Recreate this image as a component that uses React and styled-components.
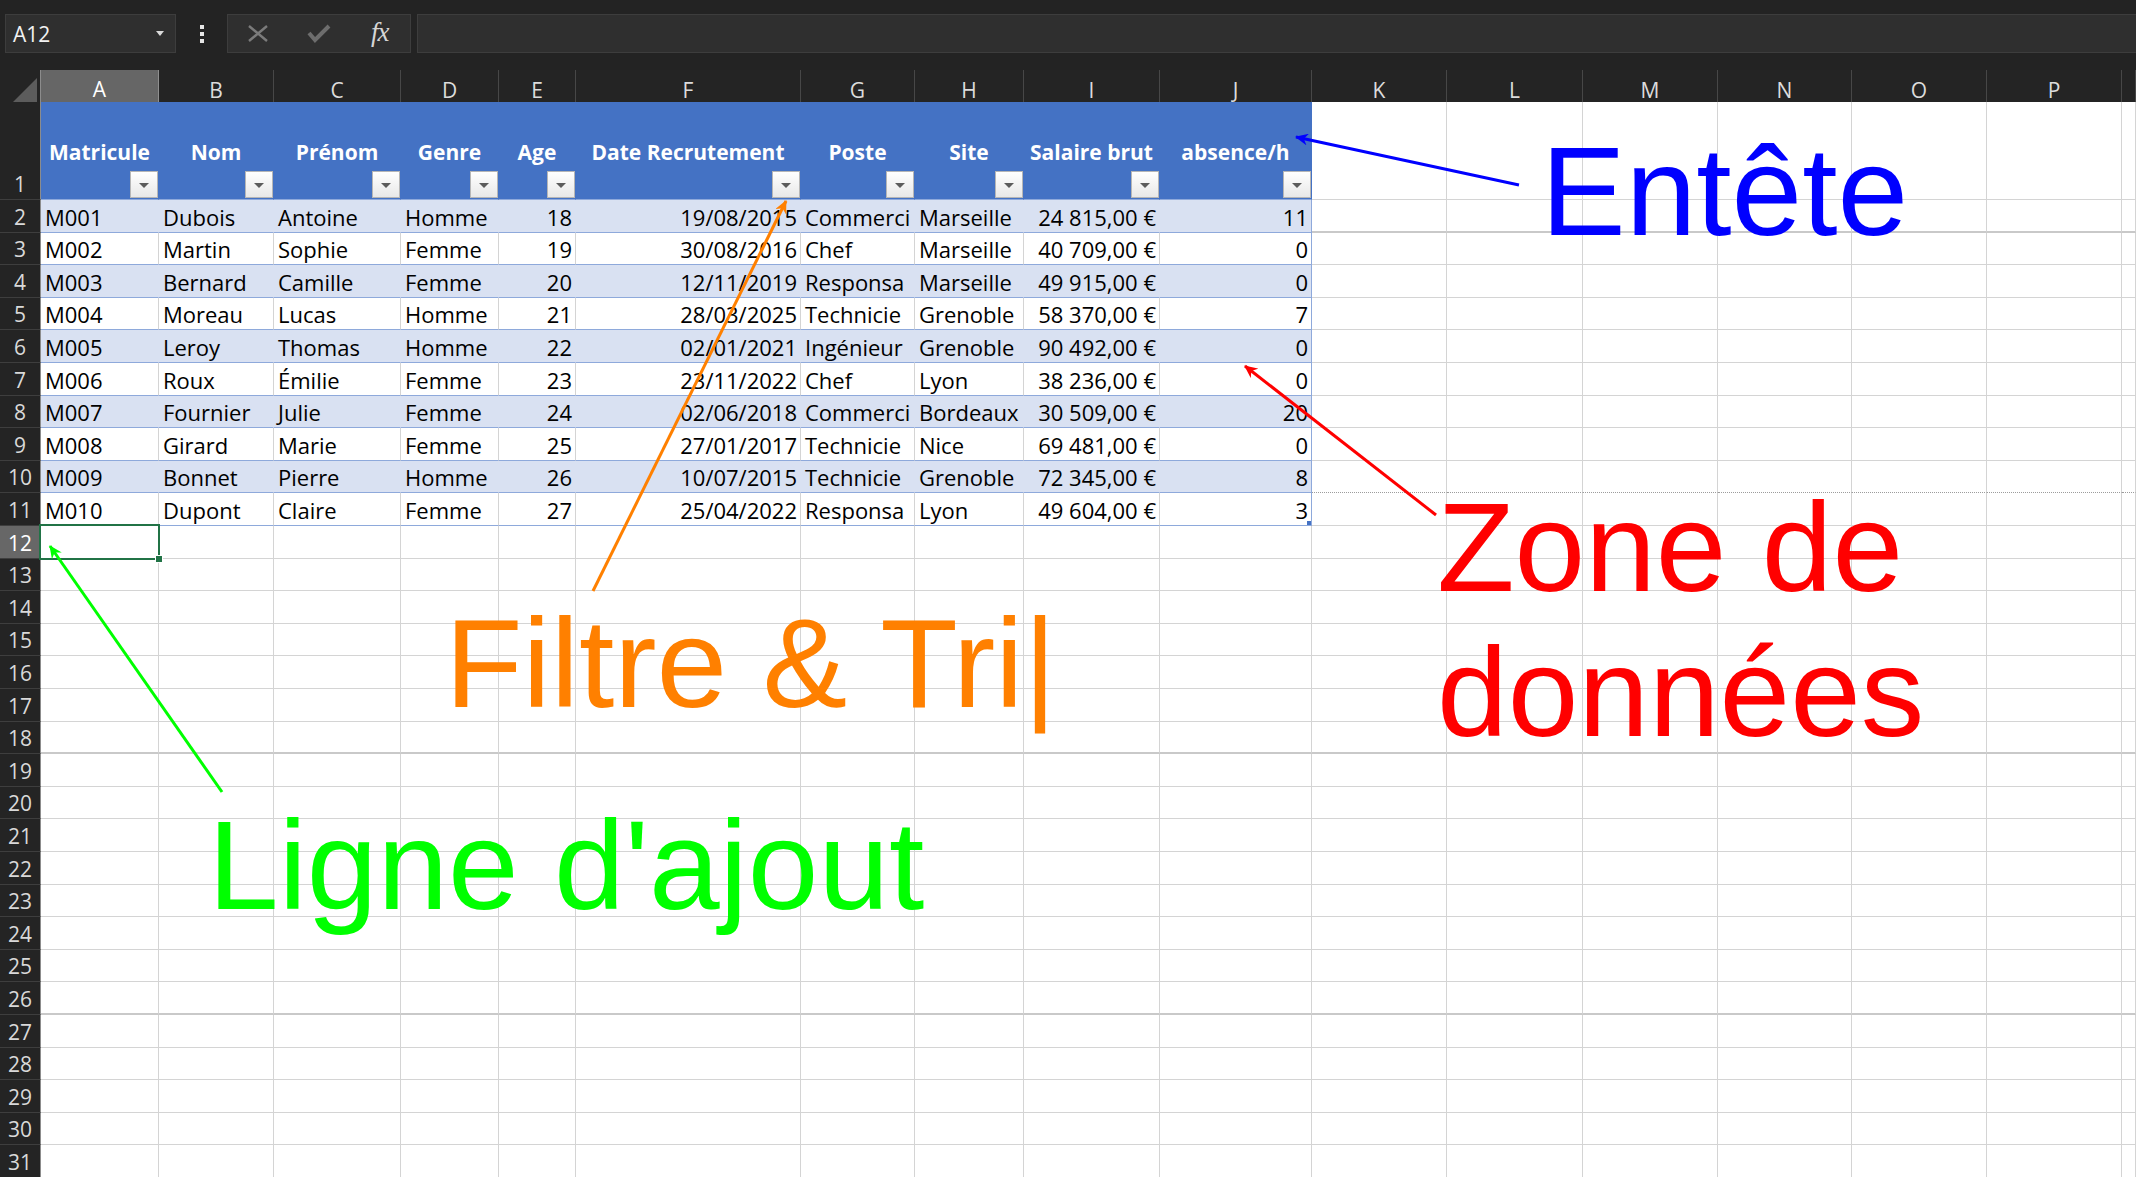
import React from 'react';
import styled, { createGlobalStyle, css } from 'styled-components';

// column widths of the visible grid (row header first, then A..P and the cut Q)
const TEMPLATE =
  '41px 118px 115px 127px 98px 77px 225px 114px 109px 136px 152px 135px 136px 135px 134px 135px 135px 1fr';
const LETTERS = ['A', 'B', 'C', 'D', 'E', 'F', 'G', 'H', 'I', 'J', 'K', 'L', 'M', 'N', 'O', 'P', ''];

const HEADERS = ['Matricule', 'Nom', 'Prénom', 'Genre', 'Age', 'Date Recrutement', 'Poste', 'Site', 'Salaire brut', 'absence/h'];
const RIGHT = [4, 5, 8, 9];

const DATA = [
  ['M001', 'Dubois', 'Antoine', 'Homme', '18', '19/08/2015', 'Commerci', 'Marseille', '24 815,00 €', '11'],
  ['M002', 'Martin', 'Sophie', 'Femme', '19', '30/08/2016', 'Chef', 'Marseille', '40 709,00 €', '0'],
  ['M003', 'Bernard', 'Camille', 'Femme', '20', '12/11/2019', 'Responsa', 'Marseille', '49 915,00 €', '0'],
  ['M004', 'Moreau', 'Lucas', 'Homme', '21', '28/03/2025', 'Technicie', 'Grenoble', '58 370,00 €', '7'],
  ['M005', 'Leroy', 'Thomas', 'Homme', '22', '02/01/2021', 'Ingénieur', 'Grenoble', '90 492,00 €', '0'],
  ['M006', 'Roux', 'Émilie', 'Femme', '23', '23/11/2022', 'Chef', 'Lyon', '38 236,00 €', '0'],
  ['M007', 'Fournier', 'Julie', 'Femme', '24', '02/06/2018', 'Commerci', 'Bordeaux', '30 509,00 €', '20'],
  ['M008', 'Girard', 'Marie', 'Femme', '25', '27/01/2017', 'Technicie', 'Nice', '69 481,00 €', '0'],
  ['M009', 'Bonnet', 'Pierre', 'Homme', '26', '10/07/2015', 'Technicie', 'Grenoble', '72 345,00 €', '8'],
  ['M010', 'Dupont', 'Claire', 'Femme', '27', '25/04/2022', 'Responsa', 'Lyon', '49 604,00 €', '3'],
];

const ROW_H = 32.6;
const rowHeight = (n) => Math.round(200 + (n - 1) * ROW_H) - Math.round(200 + (n - 2) * ROW_H);
const pageBreak = (n) => (n === 10 ? 'dotted' : n === 2 || n === 18 || n === 26 ? 'solid' : null);

const GlobalStyle = createGlobalStyle`
  html, body { margin: 0; padding: 0; background: #232323; overflow: hidden; }
`;

const Page = styled.div`
  position: relative;
  width: 2136px;
  height: 1177px;
  display: flex;
  flex-direction: column;
  background: #232323;
  overflow: hidden;
  font-family: 'Open Sans', 'Noto Sans', sans-serif;
`;

/* ---------- formula bar ---------- */

const Toolbar = styled.div`
  flex: none;
  height: 70px;
  box-sizing: border-box;
  padding: 14px 0 0 5px;
  display: flex;
  align-items: flex-start;
`;

const Box = styled.div`
  box-sizing: border-box;
  height: 39px;
  background: #2f2f2f;
  border: 1px solid #3d3d3d;
  display: flex;
  align-items: center;
`;

const NameBox = styled(Box)`
  width: 171px;
  padding: 0 11px 0 7px;
  justify-content: space-between;
  color: #f2f2f2;
  font-size: 21px;
  line-height: 28px;
`;

const MoreButton = styled.div`
  width: 51px;
  height: 39px;
  display: flex;
  align-items: center;
  justify-content: center;
`;

const FormulaTools = styled(Box)`
  width: 184px;
`;

const ToolSlot = styled.div`
  width: 61px;
  height: 100%;
  display: flex;
  align-items: center;
  justify-content: center;
`;

const Fx = styled.span`
  font: italic 27px/1 'Liberation Serif', 'DejaVu Serif', serif;
  color: #d6d6d6;
  letter-spacing: -1px;
  margin-top: -2px;
`;

const FormulaInput = styled(Box)`
  flex: 1;
  margin-left: 6px;
  border-right: none;
`;

/* ---------- grid ---------- */

const Sheet = styled.div`
  flex: 1;
  display: flex;
  flex-direction: column;
  background: #fff;
`;

const Row = styled.div`
  flex: none;
  display: grid;
  grid-template-columns: ${TEMPLATE};
  height: ${(p) => p.$h}px;
`;

const Corner = styled.div`
  box-sizing: border-box;
  background: #242424;
  border-right: 1px solid #8c8c8c;
  border-bottom: 1px solid #8c8c8c;
  display: flex;
  align-items: flex-end;
  justify-content: flex-end;
  padding: 0 3px 2px 0;
`;

const ColHead = styled.div`
  box-sizing: border-box;
  display: flex;
  align-items: center;
  justify-content: center;
  padding-top: 5px;
  font-size: 21px;
  line-height: 28px;
  color: #dcdcdc;
  background: #242424;
  border-right: 1px solid #474747;
  border-bottom: 1px solid #8c8c8c;
  ${(p) =>
    p.$selected &&
    css`
      color: #fff;
      background: #666;
      border-right-color: #8f8f8f;
      border-bottom: 2px solid #217346;
    `}
`;

const RowHead = styled.div`
  box-sizing: border-box;
  display: flex;
  align-items: flex-end;
  justify-content: center;
  padding-bottom: 1px;
  font-size: 21px;
  line-height: 28px;
  color: ${(p) => (p.$selected ? '#fff' : '#d9d9d9')};
  background: ${(p) => (p.$selected ? '#676767' : '#242424')};
  border-right: 1px solid #8c8c8c;
  border-bottom: 1px solid #3e3e3e;
`;

const bottomLine = (p) => {
  if (p.$table) return '1px solid #8EA9DB';
  if (p.$break === 'solid') return '2px solid #c9c9c9';
  if (p.$break === 'dotted') return '1px dotted #9c9c9c';
  return '1px solid #d4d4d4';
};

const Cell = styled.div`
  position: relative;
  box-sizing: border-box;
  display: flex;
  align-items: flex-end;
  justify-content: ${(p) => (p.$right ? 'flex-end' : 'flex-start')};
  padding: 0 3px 0 4px;
  overflow: hidden;
  white-space: nowrap;
  font-size: 22px;
  line-height: 30px;
  color: #000;
  background: ${(p) => (p.$band ? '#D9E1F2' : '#fff')};
  border-right: 1px solid ${(p) => (p.$edge ? '#8EA9DB' : p.$band ? '#D9E1F2' : '#d4d4d4')};
  border-bottom: ${bottomLine};
  ${(p) =>
    p.$handle &&
    css`
      &::after {
        content: '';
        position: absolute;
        right: 0;
        bottom: 0;
        width: 4px;
        height: 4px;
        background: #4472c4;
      }
    `}
  ${(p) =>
    p.$active &&
    css`
      overflow: visible;
      z-index: 2;
      &::before {
        content: '';
        position: absolute;
        left: -2px;
        top: -2px;
        right: -2px;
        bottom: -2px;
        border: 2px solid #217346;
      }
      &::after {
        content: '';
        position: absolute;
        right: -5px;
        bottom: -5px;
        width: 6px;
        height: 6px;
        background: #217346;
        border: 1px solid #fff;
      }
    `}
`;

const HeadCell = styled.div`
  position: relative;
  box-sizing: border-box;
  display: flex;
  align-items: center;
  justify-content: center;
  padding-top: 3px;
  white-space: nowrap;
  font-size: 21px;
  font-weight: 700;
  line-height: 28px;
  color: #fff;
  background: #4472c4;
  border-right: 1px solid #4472c4;
  border-bottom: 1px solid #8EA9DB;
`;

const FilterButton = styled.span`
  position: absolute;
  right: 0;
  bottom: 1px;
  width: 28px;
  height: 27px;
  box-sizing: border-box;
  border: 1px solid #b6b6b6;
  background: linear-gradient(#ffffff, #e8e8e8);
  display: flex;
  align-items: center;
  justify-content: center;
  &::after {
    content: '';
    margin-top: 2px;
    border-left: 5px solid transparent;
    border-right: 5px solid transparent;
    border-top: 5px solid #5c5c5c;
  }
`;

/* ---------- annotations ---------- */

const Overlay = styled.div`
  position: absolute;
  inset: 0;
  pointer-events: none;
  z-index: 5;
`;

const Note = styled.div`
  position: absolute;
  left: ${(p) => p.$x}px;
  top: ${(p) => p.$y}px;
  color: ${(p) => p.$color};
  font-family: 'Liberation Sans', Arial, sans-serif;
  font-size: 127px;
  line-height: ${(p) => p.$lh || 127}px;
  white-space: pre;
`;

const ARROWS = [
  { id: 'b', color: '#0000ff', x1: 1519, y1: 185, x2: 1296, y2: 137 },
  { id: 'o', color: '#ff8000', x1: 593, y1: 591, x2: 786, y2: 201 },
  { id: 'r', color: '#ff0000', x1: 1436, y1: 515, x2: 1245, y2: 366 },
  { id: 'g', color: '#00ff00', x1: 222, y1: 792, x2: 50, y2: 546 },
];

const Arrows = () => (
  <svg width="2136" height="1177" style={{ position: 'absolute', left: 0, top: 0 }}>
    <defs>
      {ARROWS.map((a) => (
        <marker key={a.id} id={`head-${a.id}`} markerUnits="userSpaceOnUse" markerWidth="14" markerHeight="12" refX="12" refY="6" orient="auto">
          <path d="M0,0 L13,6 L0,12 L4,6 z" fill={a.color} />
        </marker>
      ))}
    </defs>
    {ARROWS.map((a) => (
      <line key={a.id} x1={a.x1} y1={a.y1} x2={a.x2} y2={a.y2} stroke={a.color} strokeWidth="3" markerEnd={`url(#head-${a.id})`} />
    ))}
  </svg>
);

const emptyCells = (from, n, extra = {}) =>
  LETTERS.slice(from).map((l) => <Cell key={l || 'Q'} {...extra} $active={l === 'A' && n === 12} />);

const App = () => {
  const lower = [];
  for (let n = 12; n <= 31; n++) lower.push(n);

  return (
    <Page>
      <GlobalStyle />
      <Toolbar>
        <NameBox>
          <span>A12</span>
          <svg width="8" height="5" viewBox="0 0 8 5">
            <path d="M0,0 L8,0 L4,5 z" fill="#dadada" />
          </svg>
        </NameBox>
        <MoreButton>
          <svg width="4" height="18" viewBox="0 0 4 18">
            <rect x="0" y="0" width="4" height="4" fill="#e6e6e6" />
            <rect x="0" y="7" width="4" height="4" fill="#e6e6e6" />
            <rect x="0" y="14" width="4" height="4" fill="#e6e6e6" />
          </svg>
        </MoreButton>
        <FormulaTools>
          <ToolSlot>
            <svg width="20" height="17" viewBox="0 0 20 17">
              <path d="M1,1 L19,16 M19,1 L1,16" stroke="#7b7b7b" strokeWidth="2.4" />
            </svg>
          </ToolSlot>
          <ToolSlot>
            <svg width="24" height="19" viewBox="0 0 24 19">
              <path d="M2,9 L8,16 L22,2" stroke="#6d6d6d" strokeWidth="4" fill="none" />
            </svg>
          </ToolSlot>
          <ToolSlot>
            <Fx>fx</Fx>
          </ToolSlot>
        </FormulaTools>
        <FormulaInput />
      </Toolbar>

      <Sheet>
        <Row $h={32}>
          <Corner>
            <svg width="24" height="24" viewBox="0 0 24 24">
              <path d="M24,0 L24,24 L0,24 z" fill="#5c5c5c" />
            </svg>
          </Corner>
          {LETTERS.map((l) => (
            <ColHead key={l || 'Q'} $selected={l === 'A'}>
              {l}
            </ColHead>
          ))}
        </Row>

        <Row $h={98}>
          <RowHead>1</RowHead>
          {HEADERS.map((h) => (
            <HeadCell key={h}>
              {h}
              <FilterButton />
            </HeadCell>
          ))}
          {emptyCells(10, 1)}
        </Row>

        {DATA.map((r, i) => {
          const n = i + 2;
          const band = i % 2 === 0;
          return (
            <Row key={n} $h={rowHeight(n)}>
              <RowHead>{n}</RowHead>
              {r.map((v, c) => (
                <Cell key={c} $table $band={band} $right={RIGHT.includes(c)} $edge={c === 9} $handle={c === 9 && n === 11}>
                  {v}
                </Cell>
              ))}
              {emptyCells(10, n, { $break: pageBreak(n) })}
            </Row>
          );
        })}

        {lower.map((n) => (
          <Row key={n} $h={rowHeight(n)}>
            <RowHead $selected={n === 12}>{n}</RowHead>
            {emptyCells(0, n, { $break: pageBreak(n) })}
          </Row>
        ))}
      </Sheet>

      <Overlay>
        <Arrows />
        <Note $x={1541} $y={128} $color="#0000ff">Entête</Note>
        <Note $x={445} $y={600} $color="#ff8000">Filtre &amp; Tri|</Note>
        <Note $x={1437} $y={475} $lh={145} $color="#ff0000">{'Zone de\ndonnées'}</Note>
        <Note $x={208} $y={802} $color="#00ff00">Ligne d'ajout</Note>
      </Overlay>
    </Page>
  );
};

export default App;
